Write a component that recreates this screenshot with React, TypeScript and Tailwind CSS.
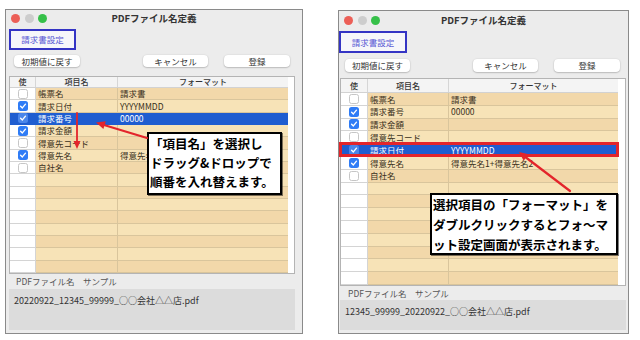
import React from "react";

type Row = { on?: boolean; name?: string; fmt?: string; sel?: boolean; red?: boolean };

const LEFT_ROWS: Row[] = [
  { name: "帳票名", fmt: "請求書" },
  { on: true, name: "請求日付", fmt: "YYYYMMDD" },
  { on: true, name: "請求番号", fmt: "00000", sel: true },
  { on: true, name: "請求金額" },
  { name: "得意先コード" },
  { on: true, name: "得意先名", fmt: "得意先名1+得意先名2" },
  { name: "自社名" },
];

const RIGHT_ROWS: Row[] = [
  { name: "帳票名", fmt: "請求書" },
  { on: true, name: "請求番号", fmt: "00000" },
  { on: true, name: "請求金額" },
  { name: "得意先コード" },
  { on: true, name: "請求日付", fmt: "YYYYMMDD", sel: true, red: true },
  { on: true, name: "得意先名", fmt: "得意先名1+得意先名2" },
  { name: "自社名" },
];

function Check({ on, sel }: { on?: boolean; sel?: boolean }) {
  if (on)
    return (
      <span className={`flex h-[10px] w-[10px] items-center justify-center rounded-[2.5px] ${sel ? "bg-[#4a86ea]" : "bg-[#2f7cf6]"}`}>
        <svg viewBox="0 0 10 10" className="h-[8px] w-[8px]">
          <path d="M2 5.3 4.2 7.4 8.1 2.7" fill="none" stroke="white" strokeWidth="1.7" strokeLinecap="round" strokeLinejoin="round" />
        </svg>
      </span>
    );
  return <span className="h-[10px] w-[10px] rounded-[2.5px] border border-[#c6c6c6] bg-white" />;
}

type Dims = {
  head: string;
  row: string;
  c1: string;
  c2: string;
  c3: string;
};

function Table({ rows, d }: { rows: Row[]; d: Dims }) {
  const all: Row[] = [...rows, ...Array.from({ length: 15 - rows.length }, () => ({}))];
  return (
    <div className="flex w-[286px] border border-[#b4b4b4] bg-white">
      <div className="flex flex-col">
        <div className={`flex ${d.head} border-b border-[#d2d2d2] bg-[#f4f4f4] text-[8px] font-medium text-[#333]`}>
          <div className={`${d.c1} flex items-center justify-center border-r border-[#d6d6d6]`}>使</div>
          <div className={`${d.c2} flex items-center justify-center border-r border-[#d6d6d6]`}>項目名</div>
          <div className={`${d.c3} flex items-center justify-center`}>フォーマット</div>
        </div>
        {all.map((r, i) => {
          const bg = i % 2 === 0 ? "bg-[#f2d8aa]" : "bg-[#f7e3b7]";
          const empty = r.name === undefined;
          return (
            <div key={i} className={`relative flex ${d.row} text-[8.5px] ${r.sel ? "bg-[#1f5dd0] text-white" : "text-[#3a3020]"}`}>
              <div className={`${d.c1} flex items-center justify-center border-r border-b ${r.sel ? "border-[#1f5dd0]" : "border-[#d4d4d4] bg-white"}`}>
                {!empty && <Check on={r.on} sel={r.sel} />}
              </div>
              <div className={`${d.c2} flex items-center border-r border-b pl-[2px] ${r.sel ? "border-[#1f5dd0]" : `border-[#d9c59c] ${bg}`}`}>
                {r.name}
              </div>
              <div className={`${d.c3} flex items-center border-b pl-[2px] ${r.sel ? "border-[#1f5dd0]" : `border-[#d9c59c] ${bg}`}`}>
                {r.fmt}
              </div>
              {r.red && <span className="absolute -left-[2px] -right-[1px] -top-[2px] bottom-0 border-[3px] border-[#e3252b]" />}
            </div>
          );
        })}
      </div>
    </div>
  );
}

function Btn({ label, cls }: { label: string; cls: string }) {
  return (
    <div className={`${cls} flex items-center justify-center rounded-[4px] bg-white text-[8.5px] text-[#333] shadow-[0_0.5px_1.5px_rgba(0,0,0,0.35)]`}>
      {label}
    </div>
  );
}

function TitleBar({ h }: { h: string }) {
  return (
    <div className={`grid ${h} grid-cols-[1fr_auto_1fr] items-center`}>
      <div className="flex gap-[4.5px] pl-[5px]">
        <span className="h-[9px] w-[9px] rounded-full bg-[#ec5f57]" />
        <span className="h-[9px] w-[9px] rounded-full bg-[#cdcdcd]" />
        <span className="h-[9px] w-[9px] rounded-full bg-[#36c049]" />
      </div>
      <div className="text-[9.5px] font-bold text-[#333]">PDFファイル名定義</div>
      <div />
    </div>
  );
}

function Tab({ cls }: { cls: string }) {
  return (
    <div className={`${cls} flex items-center justify-center border-2 border-[#3434c4] bg-[#f6f6fa] text-[8.5px] text-[#5858d4]`}>
      請求書設定
    </div>
  );
}

export default function App() {
  return (
    <div className="relative flex h-[340px] w-[640px] items-start overflow-hidden bg-white pl-[5px] pt-[9px] font-['Noto_Sans_CJK_JP','Liberation_Sans',sans-serif]">
      {/* left window */}
      <div className="flex h-[325px] w-[298px] flex-col border border-[#8a8a8a] bg-[#ececec]">
        <TitleBar h="h-[17px]" />
        <Tab cls="ml-[3px] mt-[2px] h-[21px] w-[67px]" />
        <div className="mt-[5px] flex h-[12px]">
          <Btn label="初期値に戻す" cls="ml-[8px] w-[66px]" />
          <Btn label="キャンセル" cls="ml-[63px] w-[65px]" />
          <Btn label="登録" cls="ml-[16px] w-[66px]" />
        </div>
        <div className="ml-[3px] mt-[9px]">
          <Table rows={LEFT_ROWS} d={{ head: "h-[11px]", row: "h-[12.33px]", c1: "w-[26px]", c2: "w-[82px]", c3: "w-[170px]" }} />
        </div>
        <div className="flex h-[15px] items-center pl-[10px] text-[8.5px] text-[#555]">PDFファイル名　サンプル</div>
        <div className="ml-[3px] h-[41px] w-[286px] bg-[#dcdcdc] pl-[5px] pt-[5px] text-[9px] text-[#333]">
          20220922_12345_99999_○○会社△△店.pdf
        </div>
      </div>

      {/* right window */}
      <div className="ml-[35px] mt-[1px] flex h-[324px] w-[291px] flex-col border border-[#8a8a8a] bg-[#ececec]">
        <TitleBar h="h-[18px]" />
        <Tab cls="mt-[2px] h-[22px] w-[68px]" />
        <div className="mt-[6px] flex h-[13px]">
          <Btn label="初期値に戻す" cls="ml-[6px] w-[65px]" />
          <Btn label="キャンセル" cls="ml-[63px] w-[65px]" />
          <Btn label="登録" cls="ml-[16px] w-[66px]" />
        </div>
        <div className="ml-[1px] mt-[6px]">
          <Table rows={RIGHT_ROWS} d={{ head: "h-[14px]", row: "h-[12.8px]", c1: "w-[27px]", c2: "w-[81px]", c3: "w-[169px]" }} />
        </div>
        <div className="flex h-[14px] items-center pl-[9px] text-[8.5px] text-[#555]">PDFファイル名　サンプル</div>
        <div className="ml-[1px] h-[30px] w-[286px] bg-[#dcdcdc] pl-[5px] pt-[5px] text-[9px] text-[#333]">
          12345_99999_20220922_○○会社△△店.pdf
        </div>
      </div>

      {/* callouts */}
      <div className="absolute left-[147px] top-[132px] h-[63px] w-[135px] border-2 border-black bg-white pl-[1px] text-[12.5px] font-semibold leading-[19px] text-black shadow-[1px_1px_0_rgba(0,0,0,0.5)]">
        <p>「項目名」を選択し</p>
        <p>ドラッグ&amp;ドロップで</p>
        <p>順番を入れ替えます。</p>
      </div>
      <div className="absolute left-[430px] top-[193px] h-[62px] w-[188px] border-2 border-black bg-white pl-[1px] text-[12.5px] font-semibold leading-[20px] text-black shadow-[1px_1px_0_rgba(0,0,0,0.5)]">
        <p>選択項目の「フォーマット」を</p>
        <p>ダブルクリックするとフォ〜マ</p>
        <p>ット設定画面が表示されます。</p>
      </div>

      {/* arrows */}
      <svg className="pointer-events-none absolute left-0 top-0 h-[340px] w-[640px]" viewBox="0 0 640 340">
        <g stroke="#e3242b" strokeWidth="2.2" strokeLinecap="round" fill="#e3242b">
          <line x1="147" y1="138" x2="104" y2="125" />
          <polygon points="96,122.5 105.8,121.3 103.4,128.9" stroke="none" />
          <line x1="77" y1="113" x2="77" y2="142" strokeWidth="1.8" />
          <polygon points="77,149 73.5,141 80.5,141" stroke="none" />
          <line x1="570" y1="191" x2="526" y2="157.5" />
          <polygon points="519,152 528.6,154.3 523.7,160.7" stroke="none" />
        </g>
      </svg>
    </div>
  );
}
